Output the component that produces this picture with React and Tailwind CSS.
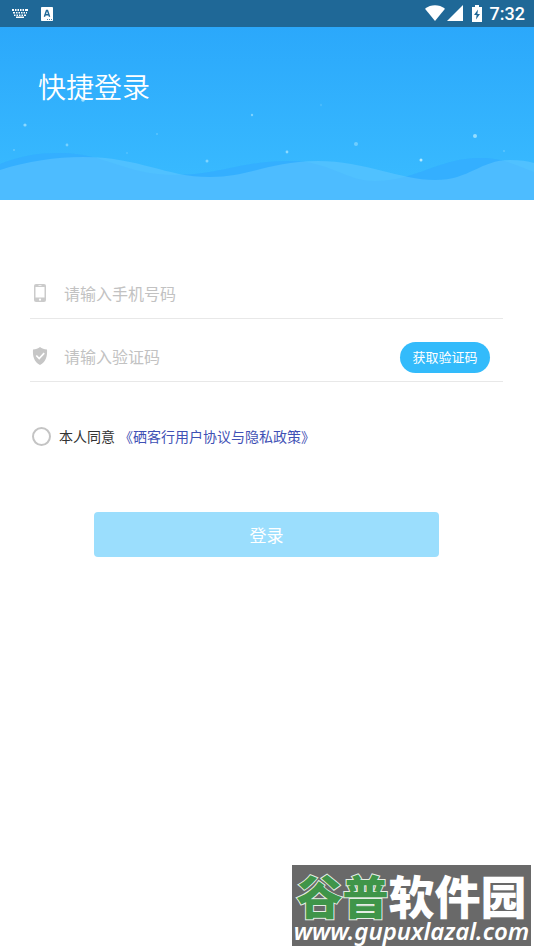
import { useState } from "react";

const stars = [
  { x: 25, y: 98, r: 1.6, o: 0.6 },
  { x: 67, y: 118, r: 1.4, o: 0.45 },
  { x: 14, y: 123, r: 1.1, o: 0.3 },
  { x: 83, y: 73, r: 1.8, o: 0.75 },
  { x: 157, y: 107, r: 1.1, o: 0.25 },
  { x: 127, y: 126, r: 1, o: 0.2 },
  { x: 252, y: 88, r: 1.2, o: 0.5 },
  { x: 207, y: 134, r: 1.5, o: 0.5 },
  { x: 287, y: 125, r: 1.4, o: 0.6 },
  { x: 321, y: 78, r: 1.2, o: 0.15 },
  { x: 356, y: 117, r: 2, o: 0.4 },
  { x: 421, y: 133, r: 1.5, o: 0.85 },
  { x: 475, y: 109, r: 2, o: 0.65 },
  { x: 504, y: 124, r: 1.1, o: 0.25 }
];

const frontWave =
  "M0 143 C28 134 55 130 83 130 C140 130 165 150 210 150 C250 150 270 134 318 134 C365 134 400 153 435 153 C470 153 480 133 510 133 C520 133 528 134 534 136 V173 H0Z";
const backWave =
  "M0 137 C20 129 38 126 60 126 C105 126 125 148 175 148 C220 148 240 134 290 134 C330 134 345 154 375 154 C415 154 440 131 480 131 C505 131 520 140 534 145 V173 H0Z";

function StatusBar() {
  return (
    <div className="flex h-[27px] items-center bg-[#1f6897] pl-3 pr-[9px] text-white">
      <svg className="h-[9px] w-4" viewBox="0 0 16 9" fill="currentColor" aria-hidden="true">
        <path d="M0 0h2v2H0zM3 0h1.5v2H3zM5.5 0H7v2H5.5zM8 0h1.5v2H8zM10.5 0H12v2h-1.5zM13 0h3v2h-3zM1 3h2v1.6H1zM4 3h1.5v1.6H4zM6.5 3H8v1.6H6.5zM9 3h1.5v1.6H9zM11.5 3H13v1.6h-1.5zM14 3h1v1.6h-1zM2 5.4h1.5V7H2zM4.5 5.4H6V7H4.5zM7 5.4h1.5V7H7zM9.5 5.4H11V7H9.5zM12 5.4h2V7h-2zM4 7.5h8V9H4z" />
      </svg>
      <svg className="ml-[13px] h-[14px] w-3" viewBox="0 0 12 14" aria-hidden="true">
        <rect width="12" height="14" rx="0.8" fill="currentColor" />
        <path
          d="M3.400 9.800 5.500 3.500h1L8.600 9.800M4.200 7.800h3.600"
          fill="none"
          stroke="#1f6897"
          strokeWidth="1.400"
        />
        <path d="M6 12h1v1H6zM8 12h1v1H8zM10 12h1v1h-1z" fill="#1f6897" opacity="0.8" />
      </svg>
      <svg className="mb-px ml-auto h-4 w-5" viewBox="0 0 20 16" fill="currentColor" aria-hidden="true">
        <path d="M0 3.700C6-.8 14-.8 20 3.700L10 16z" />
      </svg>
      <svg className="mb-px ml-[2px] h-4 w-4" viewBox="0 0 16 16" fill="currentColor" aria-hidden="true">
        <path d="M16 0v16H0z" />
      </svg>
      <svg className="mb-px ml-[9px] h-[17px] w-[10px]" viewBox="0 0 10 17" aria-hidden="true">
        <path d="M3 0h4v2h3v15H0V2h3z" fill="currentColor" />
        <path d="M6 4.500 2 10h2.600L4 14.500 8 9H5.400z" fill="#1f6897" />
      </svg>
      <span className="ml-2 font-['Roboto',sans-serif] text-lg leading-none font-medium">7:32</span>
    </div>
  );
}

function Banner() {
  return (
    <header className="relative h-[173px] bg-linear-to-b from-[#2ba8fb] to-[#3abcff] px-[38px] pt-[39px]">
      <svg
        className="absolute inset-0 h-full w-full"
        viewBox="0 0 534 173"
        preserveAspectRatio="none"
        aria-hidden="true"
      >
        {stars.map((star) => (
          <circle key={star.x} cx={star.x} cy={star.y} r={star.r} fill="#c8f2ff" opacity={star.o} />
        ))}
        <path d={backWave} fill="#31b1ff" />
        <path d={frontWave} fill="#50c1ff" />
        <path d={backWave} fill="#3fa8ff" opacity="0.2" />
      </svg>
      <h1 className="relative text-[28px] leading-10 font-[350] text-white">快捷登录</h1>
    </header>
  );
}

function PhoneIcon() {
  return (
    <svg className="h-[18px] w-5" viewBox="0 0 20 18" aria-hidden="true">
      <rect x="4" y="0" width="12" height="18" rx="2" fill="#cbcbcb" />
      <path d="M5.500 3h9v10.500h-9z" fill="#fff" />
      <path d="M8.500 1.200h3v.7h-3z" fill="#fff" />
      <circle cx="10" cy="15.700" r="1.100" fill="#fff" />
    </svg>
  );
}

function ShieldIcon() {
  return (
    <svg className="h-[18px] w-5" viewBox="0 0 20 18" aria-hidden="true">
      <path
        d="M10 0c1.800 1.700 4.200 2.300 7 2.500C17.500 9 16 15 10 18 4 15 2.500 9 3 2.500 5.800 2.300 8.200 1.700 10 0z"
        fill="#c6c6c6"
      />
      <path d="m6.300 8.500 2.900 3 5-5.300" fill="none" stroke="#fff" strokeWidth="1.700" />
    </svg>
  );
}

function Watermark() {
  return (
    <div className="absolute right-[3px] bottom-1 flex h-[81px] w-[239px] flex-col items-center bg-[#696969] whitespace-nowrap text-white">
      <div className="mt-1 text-[46px] leading-[50px] font-black">
        <span className="text-[#3f9549] [-webkit-text-stroke:2px_#e4eee4] [paint-order:stroke_fill]">谷普</span>
        <span>软件园</span>
      </div>
      <div className="font-['Noto_Sans',sans-serif] text-2xl leading-6 font-semibold italic">
        www.gupuxlazal.com
      </div>
    </div>
  );
}

export default function App() {
  const [phone, setPhone] = useState("");
  const [code, setCode] = useState("");
  const [agreed, setAgreed] = useState(false);

  return (
    <div className="relative min-h-screen bg-white font-['Noto_Sans_CJK_SC',sans-serif]">
      <StatusBar />
      <Banner />

      <form onSubmit={(event) => event.preventDefault()} className="pt-[68px]">
        <div className="mr-[31px] ml-[30px]">
          <div className="flex h-[51px] items-center border-b border-[#e8e8e8]">
            <label htmlFor="phone" aria-label="手机号码">
              <PhoneIcon />
            </label>
            <input
              id="phone"
              type="tel"
              className="ml-[14px] min-w-0 flex-1 text-base text-[#333] outline-none placeholder:text-[#c2c2c2]"
              placeholder="请输入手机号码"
              value={phone}
              onChange={(event) => setPhone(event.target.value)}
            />
          </div>
          <div className="mt-3 flex h-[51px] items-center border-b border-[#e8e8e8]">
            <label htmlFor="code" aria-label="验证码">
              <ShieldIcon />
            </label>
            <input
              id="code"
              type="text"
              className="ml-[14px] min-w-0 flex-1 text-base text-[#333] outline-none placeholder:text-[#c2c2c2]"
              placeholder="请输入验证码"
              value={code}
              onChange={(event) => setCode(event.target.value)}
            />
            <button
              type="button"
              className="mt-[2px] mr-[13px] h-[31px] w-[90px] rounded-full bg-[#33bbfb] text-[13px] text-white"
            >
              获取验证码
            </button>
          </div>
        </div>

        <div className="mt-11 ml-8 flex h-5 items-center text-sm">
          <input
            id="agree"
            type="checkbox"
            className="h-[19px] w-[19px] appearance-none rounded-full border-2 border-[#c4c4c4] checked:border-[#33bbfb] checked:bg-[#33bbfb]"
            checked={agreed}
            onChange={(event) => setAgreed(event.target.checked)}
          />
          <label htmlFor="agree" className="ml-2 text-[#333]">
            本人同意
          </label>
          <a href="#agreement" className="ml-1 text-[#3f51b5]">
            《硒客行用户协议与隐私政策》
          </a>
        </div>

        <div className="mr-[95px] ml-[94px] mt-[66px]">
          <button
            type="submit"
            className="block h-[45px] w-full rounded bg-[#9bdefd] text-[17px] text-white"
          >
            登录
          </button>
        </div>
      </form>

      <Watermark />
    </div>
  );
}
